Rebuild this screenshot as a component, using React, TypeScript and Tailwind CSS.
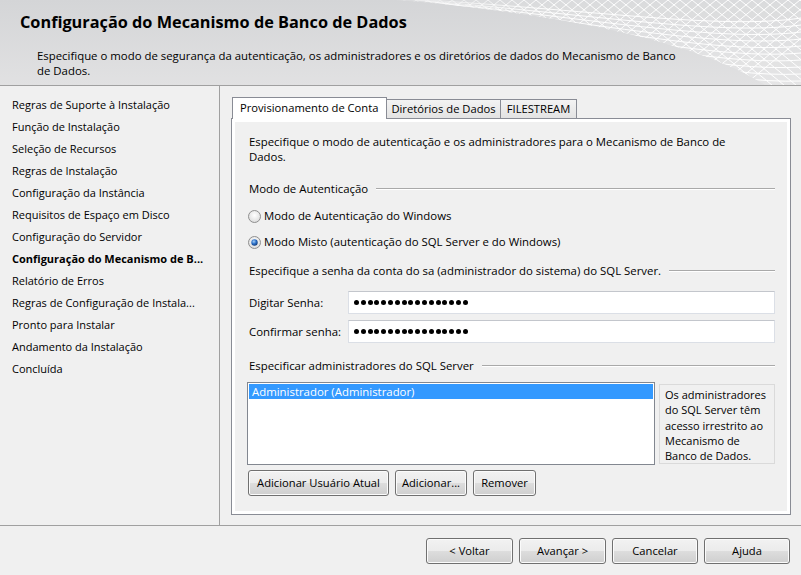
import React from 'react';

const navItems = [
  'Regras de Suporte à Instalação',
  'Função de Instalação',
  'Seleção de Recursos',
  'Regras de Instalação',
  'Configuração da Instância',
  'Requisitos de Espaço em Disco',
  'Configuração do Servidor',
  'Configuração do Mecanismo de B...',
  'Relatório de Erros',
  'Regras de Configuração de Instala...',
  'Pronto para Instalar',
  'Andamento da Instalação',
  'Concluída',
];

function WinButton({ label, className = '' }: { label: string; className?: string }) {
  return (
    <button
      className={`h-[26px] rounded-[3px] border border-[#707070] bg-[linear-gradient(#f2f2f2_0%,#ebebeb_50%,#dddddd_51%,#cfcfcf_100%)] shadow-[inset_0_0_0_1px_#fbfbfb] text-black text-[11.2px] leading-none ${className}`}
    >
      {label}
    </button>
  );
}

function Radio({ checked }: { checked?: boolean }) {
  return (
    <svg width="13" height="13" viewBox="0 0 13 13" className="shrink-0">
      <defs>
        <radialGradient id="rbg" cx="50%" cy="40%" r="60%">
          <stop offset="0%" stopColor="#ffffff" />
          <stop offset="100%" stopColor="#dcdcdc" />
        </radialGradient>
        <radialGradient id="rdot" cx="40%" cy="35%" r="65%">
          <stop offset="0%" stopColor="#a6d0f5" />
          <stop offset="55%" stopColor="#2a6fc9" />
          <stop offset="100%" stopColor="#163f7e" />
        </radialGradient>
      </defs>
      <circle cx="6.5" cy="6.5" r="6" fill="url(#rbg)" stroke="#8f8f8f" strokeWidth="1" />
      {checked && <circle cx="6.5" cy="6.5" r="3.2" fill="url(#rdot)" />}
    </svg>
  );
}

function GroupLabel({ text }: { text: string }) {
  return (
    <div className="flex items-center h-[16px] pl-[2px] gap-[8px]">
      <span className="whitespace-nowrap">{text}</span>
      <div className="flex-1 h-0 border-t border-[#a9a9a9] border-b border-b-white" />
    </div>
  );
}

function PasswordField({ label }: { label: string }) {
  return (
    <div className="flex items-center h-[23px]">
      <span className="w-[101px] pl-[2px] shrink-0">{label}</span>
      <div className="flex-1 h-full bg-white border border-[#dbdfe6] border-t-[#c3c6cc] flex items-center pl-[5px] gap-[1.8px]">
        {Array.from({ length: 17 }).map((_, i) => (
          <span key={i} className="w-[5px] h-[5px] rounded-full bg-black" />
        ))}
      </div>
    </div>
  );
}

function HeaderWave() {
  const slashes = Array.from({ length: 40 });
  const band = 'M 395 0 L 801 0 L 801 85 L 765 85 C 715 52, 600 16, 395 0 Z';
  return (
    <svg className="absolute right-0 top-0" width="420" height="85" viewBox="381 0 420 85">
      <defs>
        <clipPath id="band">
          <path d={band} />
        </clipPath>
        <linearGradient id="fade" gradientUnits="userSpaceOnUse" x1="395" y1="0" x2="801" y2="0">
          <stop offset="0%" stopColor="#fff" stopOpacity="0.2" />
          <stop offset="35%" stopColor="#fff" stopOpacity="0.9" />
          <stop offset="100%" stopColor="#fff" stopOpacity="1" />
        </linearGradient>
      </defs>
      <path d={band} fill="#fff" fillOpacity="0.15" />
      <g clipPath="url(#band)" stroke="url(#fade)" strokeWidth="1" fill="none">
        {slashes.map((_, i) => (
          <line key={`a${i}`} x1={380 + i * 12} y1={0} x2={380 + i * 12 - 110} y2={90} />
        ))}
        {slashes.map((_, i) => (
          <line key={`b${i}`} x1={380 + i * 12} y1={0} x2={380 + i * 12 + 110} y2={90} />
        ))}
        {Array.from({ length: 12 }).map((_, i) => (
          <path key={`c${i}`} d={`M ${395 + i * 10} ${-2 + i} C 600 ${10 + i * 5}, 720 ${30 + i * 6}, 801 ${18 + i * 7}`} />
        ))}
      </g>
    </svg>
  );
}

export default function App() {
  return (
    <div className="w-[801px] h-[575px] bg-[#f0f0f0] flex flex-col overflow-hidden text-[11.4px] text-black font-['Open_Sans',sans-serif]">
      {/* Header */}
      <header className="relative h-[86px] shrink-0 border-b border-[#a0a0a0] bg-[linear-gradient(to_bottom,#d4d5d7,#e1e1e2)]">
        <HeaderWave />
        <div className="relative pl-[20px] pt-[10px]">
          <h1 className="text-[16.3px] font-bold leading-[24px]">Configuração do Mecanismo de Banco de Dados</h1>
          <p className="pl-[17px] mt-[14px] leading-[15px]">
            Especifique o modo de segurança da autenticação, os administradores e os diretórios de dados do Mecanismo de Banco
            <br />
            de Dados.
          </p>
        </div>
      </header>

      {/* Middle */}
      <div className="flex flex-1 min-h-0">
        <nav className="w-[220px] shrink-0 border-r border-[#a0a0a0] pt-[8px] pl-[12px] text-[11px]">
          {navItems.map((item) => (
            <div
              key={item}
              className={`h-[22px] leading-[22px] whitespace-nowrap ${item.startsWith('Configuração do Mecanismo') ? 'font-bold' : ''}`}
            >
              {item}
            </div>
          ))}
        </nav>

        <main className="flex-1 pl-[11px] pt-[11px] pr-[11px] flex flex-col">
          {/* Tabs */}
          <div className="flex items-end h-[21px] pl-[1px] text-[11.2px]">
            <div className="relative z-10 w-[155px] h-[22px] -mb-[1px] bg-white border border-b-0 border-[#898c95] pl-[7px] leading-[19px]">
              Provisionamento de Conta
            </div>
            <div className="w-[114px] h-[19px] border border-b-0 border-l-0 border-[#898c95] bg-[linear-gradient(#f3f3f3,#e3e3e3)] text-center leading-[18px]">
              Diretórios de Dados
            </div>
            <div className="w-[76px] h-[19px] border border-b-0 border-l-0 border-[#898c95] bg-[linear-gradient(#f3f3f3,#e3e3e3)] text-center leading-[18px]">
              FILESTREAM
            </div>
          </div>

          {/* Panel */}
          <div className="h-[397px] border border-[#898c95] bg-white p-[3px]">
            <div className="h-full bg-[#f0f0f0] px-[12px] pt-[12px] flex flex-col">
              <p className="pl-[2px] leading-[15px]">
                Especifique o modo de autenticação e os administradores para o Mecanismo de Banco de
                <br />
                Dados.
              </p>

              <div className="mt-[17px]">
                <GroupLabel text="Modo de Autenticação" />
              </div>

              <div className="mt-[9px] h-[20px] flex items-center gap-[3px] pl-[1px]">
                <Radio />
                <span>Modo de Autenticação do Windows</span>
              </div>
              <div className="mt-[6px] h-[20px] flex items-center gap-[3px] pl-[1px]">
                <Radio checked />
                <span>Modo Misto (autenticação do SQL Server e do Windows)</span>
              </div>

              <div className="mt-[11px]">
                <GroupLabel text="Especifique a senha da conta do sa (administrador do sistema) do SQL Server." />
              </div>

              <div className="mt-[12px]">
                <PasswordField label="Digitar Senha:" />
              </div>
              <div className="mt-[6px]">
                <PasswordField label="Confirmar senha:" />
              </div>

              <div className="mt-[15px]">
                <GroupLabel text="Especificar administradores do SQL Server" />
              </div>

              <div className="mt-[8px] flex gap-[4px]">
                <div className="w-[408px] h-[83px] bg-white border border-[#828790] p-[1px]">
                  <div className="h-[15px] leading-[15px] bg-[#3399ff] text-white pl-[3px]">Administrador (Administrador)</div>
                </div>
                <div className="w-[116px] h-[80px] mt-[2px] border border-[#dadada] bg-[#f0f0f0] pl-[5px] pt-[2px] leading-[15.3px] text-[11px]">
                  Os administradores
                  <br />
                  do SQL Server têm
                  <br />
                  acesso irrestrito ao
                  <br />
                  Mecanismo de
                  <br />
                  Banco de Dados.
                </div>
              </div>

              <div className="mt-[5px] flex gap-[6px] pl-[1px]">
                <WinButton label="Adicionar Usuário Atual" className="w-[141px]" />
                <WinButton label="Adicionar..." className="w-[72px]" />
                <WinButton label="Remover" className="w-[63px]" />
              </div>
            </div>
          </div>
        </main>
      </div>

      {/* Footer */}
      <footer className="h-[50px] shrink-0 border-t border-[#a0a0a0] flex items-center justify-end gap-[6px] pr-[11px]">
        <WinButton label="< Voltar" className="w-[87px]" />
        <WinButton label="Avançar >" className="w-[87px]" />
        <WinButton label="Cancelar" className="w-[86px]" />
        <WinButton label="Ajuda" className="w-[86px]" />
      </footer>
    </div>
  );
}
